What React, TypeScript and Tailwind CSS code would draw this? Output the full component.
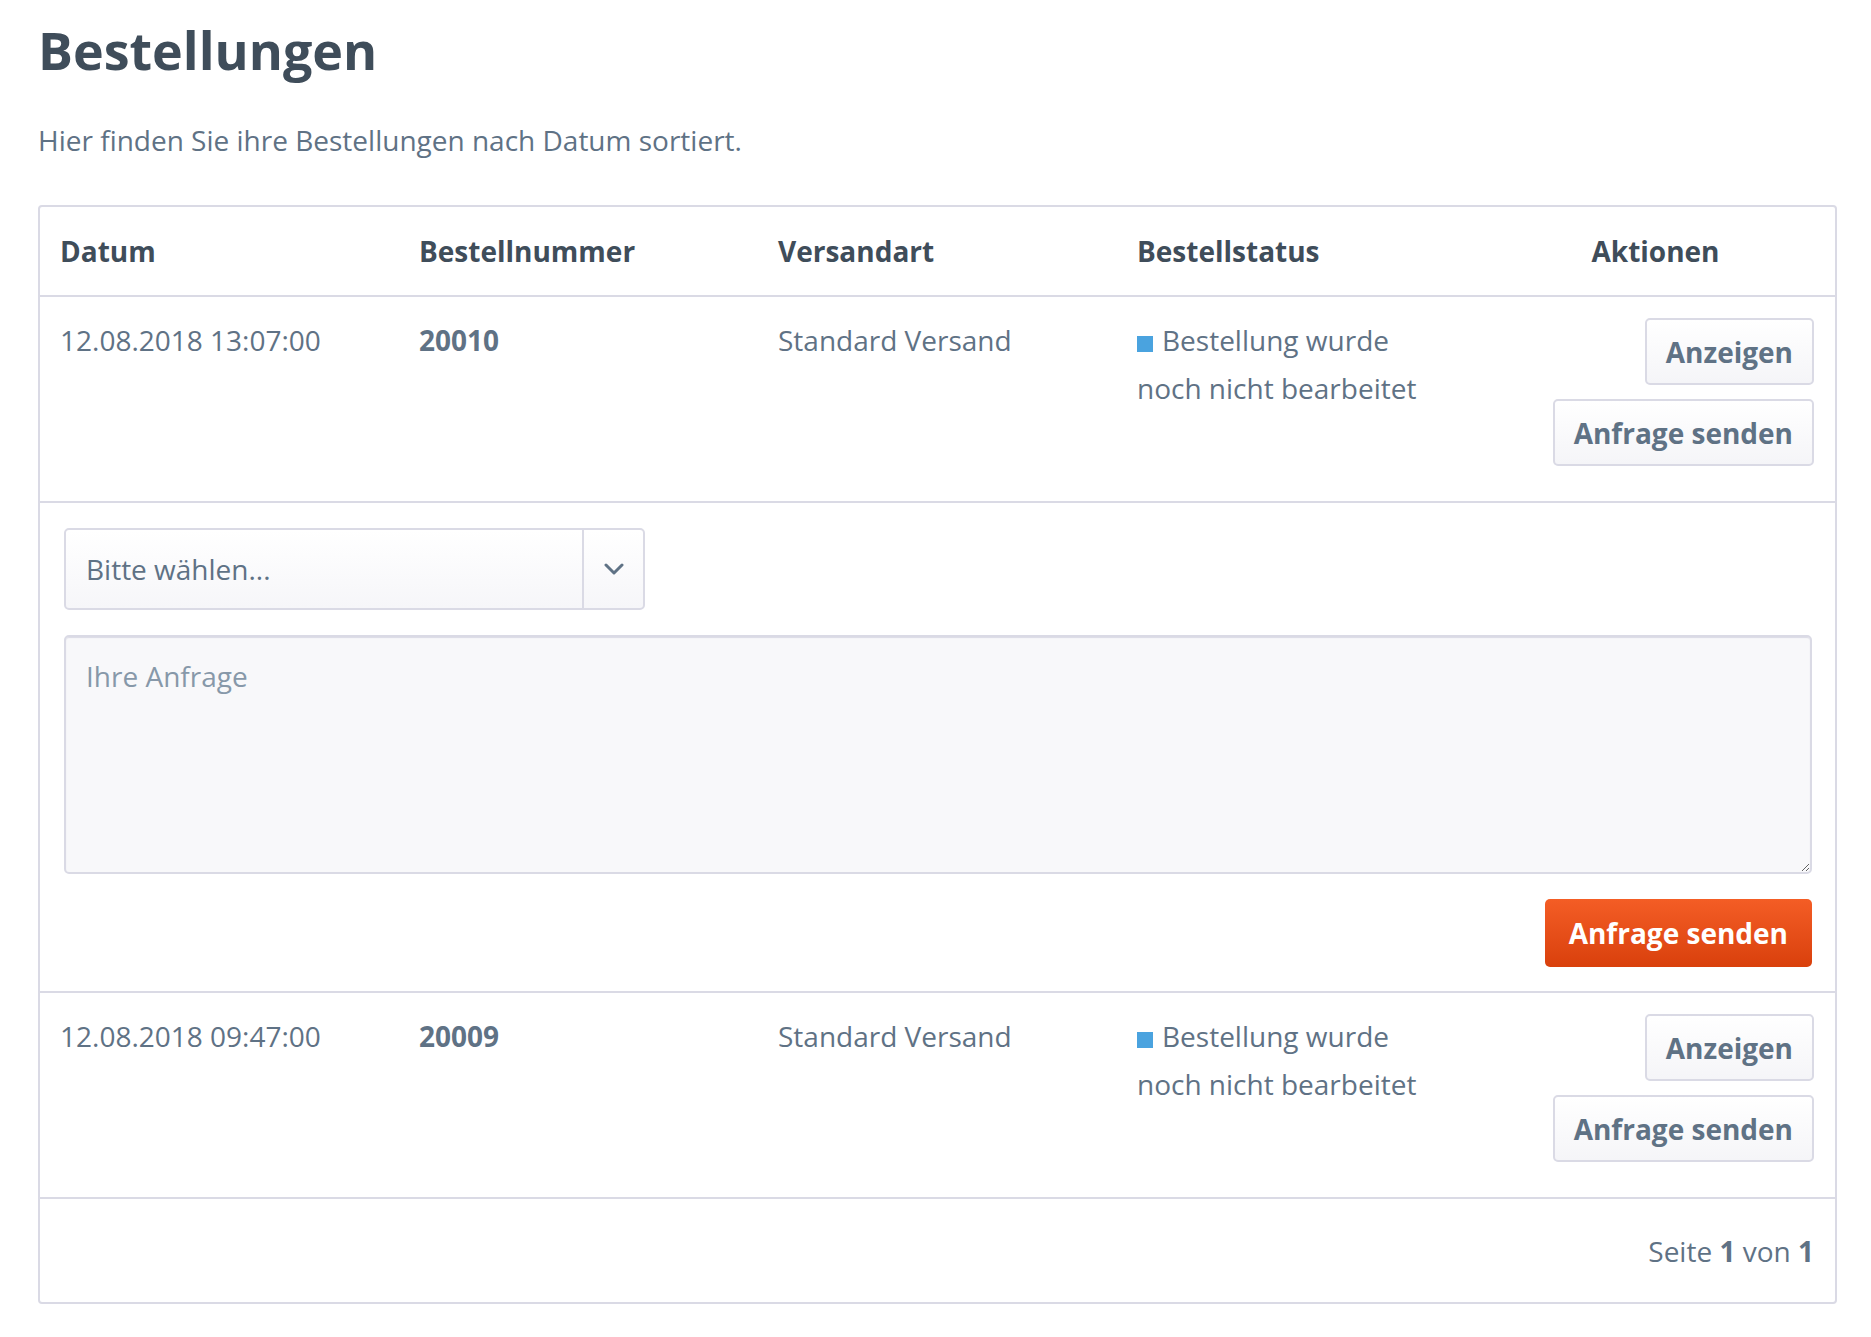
import React from "react";

type Order = {
  date: string;
  number: string;
  shipping: string;
  status: string;
  expanded: boolean;
};

const orders: Order[] = [
  {
    date: "12.08.2018 13:07:00",
    number: "20010",
    shipping: "Standard Versand",
    status: "Bestellung wurde noch nicht bearbeitet",
    expanded: true,
  },
  {
    date: "12.08.2018 09:47:00",
    number: "20009",
    shipping: "Standard Versand",
    status: "Bestellung wurde noch nicht bearbeitet",
    expanded: false,
  },
];

const columns = ["Datum", "Bestellnummer", "Versandart", "Bestellstatus"];

function GhostButton({ children }: { children: React.ReactNode }) {
  return (
    <button
      type="button"
      className="flex h-[67px] items-center rounded-[5px] border-2 border-[#dadae5] bg-linear-to-b from-white to-[#f5f5f8] px-[19px] text-[28px] font-bold leading-[48px] text-[#5f7285]"
    >
      {children}
    </button>
  );
}

function RequestForm() {
  return (
    <div className="border-b-2 border-[#dadae5] pt-[25px] pr-[23px] pb-[24px] pl-[24px]">
      {/* select */}
      <div className="flex h-[82px] w-[581px] rounded-[5px] border-2 border-[#dadae5] bg-linear-to-b from-white to-[#f6f6f9]">
        <div className="flex flex-1 items-center pl-[20px] text-[28px] leading-[48px] text-[#5f7285]">
          Bitte wählen...
        </div>
        <div className="flex w-[61px] items-center justify-center border-l-2 border-[#dadae5]">
          <svg width="20" height="12" viewBox="0 0 20 12" fill="none">
            <polyline
              points="2,2 10,10 18,2"
              stroke="#5f7285"
              strokeWidth="3"
              strokeLinecap="round"
              strokeLinejoin="round"
            />
          </svg>
        </div>
      </div>

      {/* textarea */}
      <textarea
        placeholder="Ihre Anfrage"
        className="mt-[25px] block h-[239px] w-full rounded-[5px] border-2 border-[#dadae5] bg-[#f8f8fa] px-[20px] pt-[15px] text-[28px] leading-[48px] text-[#5f7285] shadow-[inset_0_1px_1px_#dadae5] outline-none placeholder:text-[#8798a9]"
      />

      <div className="mt-[25px] flex justify-end">
        <button
          type="button"
          className="flex h-[68px] items-center rounded-[5px] bg-linear-to-b from-[#f45d25] to-[#d9400b] px-[24px] text-[28px] font-bold leading-[48px] text-white"
        >
          Anfrage senden
        </button>
      </div>
    </div>
  );
}

function OrderRow({ order }: { order: Order }) {
  return (
    <>
      <div className="grid grid-cols-5 border-b-2 border-[#dadae5] text-[28px] leading-[48px] text-[#5f7285]">
        <div className="px-5 pt-[19px]">{order.date}</div>
        <div className="px-5 pt-[19px] font-bold">{order.number}</div>
        <div className="px-5 pt-[19px]">{order.shipping}</div>
        <div className="px-5 pt-[19px]">
          <span className="mr-[9px] inline-block h-[16px] w-[16px] bg-[#4aa3df] align-middle" />
          {order.status}
        </div>
        <div className="flex flex-col items-end gap-[14px] pt-[21px] pr-[21px] pb-[35px]">
          <GhostButton>Anzeigen</GhostButton>
          <GhostButton>Anfrage senden</GhostButton>
        </div>
      </div>
      {order.expanded && <RequestForm />}
    </>
  );
}

export default function App() {
  return (
    <div className="min-h-screen bg-white pt-[20px] pr-[34px] pl-[38px] font-['Open_Sans',sans-serif] text-[#5f7285]">
      <h1 className="text-[52px] font-bold leading-[60px] text-[#3f4d5a]">
        Bestellungen
      </h1>
      <p className="mt-[36px] text-[28px] leading-[48px]">
        Hier finden Sie ihre Bestellungen nach Datum sortiert.
      </p>

      {/* Orders table */}
      <div className="mt-[41px] rounded-[4px] border-2 border-[#dadae5]">
        <div className="grid grid-cols-5 border-b-2 border-[#dadae5] text-[28px] font-bold leading-[48px] text-[#3f4d5a]">
          {columns.map((c) => (
            <div key={c} className="px-5 py-5">
              {c}
            </div>
          ))}
          <div className="px-5 py-5 text-center">Aktionen</div>
        </div>

        {orders.map((o) => (
          <OrderRow key={o.number} order={o} />
        ))}

        <div className="flex justify-end px-[21px] pt-[28px] pb-[27px] text-[28px] leading-[48px] text-[#5f7285]">
          Seite&nbsp;<b>1</b>&nbsp;von&nbsp;<b>1</b>
        </div>
      </div>
    </div>
  );
}
